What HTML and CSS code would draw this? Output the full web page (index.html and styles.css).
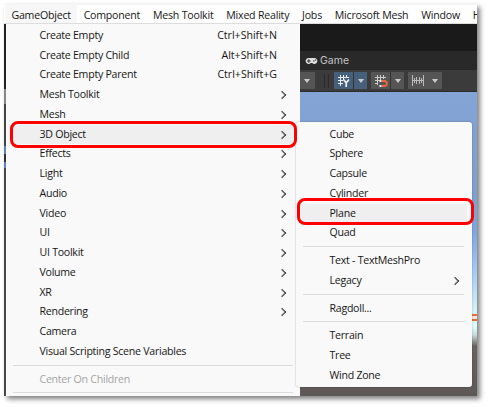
FILE: index.html
```html
<!DOCTYPE html>
<html lang="en">
<head>
<meta charset="utf-8">
<title>GameObject menu</title>
<link rel="stylesheet" href="styles.css">
</head>
<body>
<div class="window">
  <nav class="menubar"><span class="open">GameObject</span><span>Component</span><span>Mesh Toolkit</span><span>Mixed Reality</span><span>Jobs</span><span>Microsoft Mesh</span><span>Window</span><span>H</span></nav>
  <div class="workspace">
    <div class="edge"></div>
    <div class="menu">
      <div class="item">Create Empty<kbd>Ctrl+Shift+N</kbd></div>
      <div class="item">Create Empty Child<kbd>Alt+Shift+N</kbd></div>
      <div class="item">Create Empty Parent<kbd>Ctrl+Shift+G</kbd></div>
      <div class="item sub">Mesh Toolkit</div>
      <div class="item sub">Mesh</div>
      <div class="item sub hover">3D Object</div>
      <div class="item sub">Effects</div>
      <div class="item sub">Light</div>
      <div class="item sub">Audio</div>
      <div class="item sub">Video</div>
      <div class="item sub">UI</div>
      <div class="item sub">UI Toolkit</div>
      <div class="item sub">Volume</div>
      <div class="item sub">XR</div>
      <div class="item sub">Rendering</div>
      <div class="item">Camera</div>
      <div class="item">Visual Scripting Scene Variables</div>
      <div class="sep"></div>
      <div class="item disabled">Center On Children</div>
      <div class="sep"></div>
    </div>
    <div class="editor">
      <div class="titlebar"></div>
      <div class="tab">
        <svg width="13" height="8" viewBox="0 0 13 8"><path fill="#ddd" fill-rule="evenodd" d="M3.8 1h5.4a3 3 0 1 1-2 5.1H5.8A3 3 0 1 1 3.8 1ZM3.3 2.3v1.2H2.1v1h1.2v1.2h1V4.500h1.200v-1H4.300V2.300ZM8.300 3.300v1.200h1.200V3.300Zm1.700-.900v1.200h1.200V2.400Z"/></svg>
        <span>Game</span>
      </div>
      <div class="toolbar">
        <div class="btn first"><i></i></div>
        <div class="grip"></div>
        <div class="btn split on"><b><svg width="14" height="14" viewBox="0 0 14 14" fill="none" stroke="#eee"><path d="M1 3.500h11M1 6.500h5M1 9.500h5M3.500 1v11M6.500 1v5M9.500 1v3" stroke-width="1"/><path d="m6.500 5.500 2.700 3.300 2.800-3.300M9.200 8.500V13" stroke-width="1.700"/></svg></b><i></i></div>
        <div class="btn split"><b><svg width="14" height="14" viewBox="0 0 14 14" fill="none" stroke="#ccc"><path d="M1 3.500h11M1 6.500h5M1 9.500h3M3.500 1v10M6.500 1v5M9.500 1v4"/><path d="M8 7h2.300a2.400 2.400 0 0 1 0 5H8" stroke="#f0673c" stroke-width="1.800"/><path d="M5.500 7h2M5.500 12h2" stroke="#eee" stroke-width="1.800"/></svg></b><i></i></div>
        <div class="btn snap"><b><svg width="14" height="13" viewBox="0 0 14 13" fill="none" stroke="#bbb"><path d="M1.500 1v11M12.500 1v11M1 6.500h12M3.500 4v5M5.500 3v7M8.500 3v7M10.500 4v5"/></svg></b><i></i></div>
      </div>
      <div class="scene"><div class="gizmo"></div></div>
    </div>
  </div>
</div>
<div class="submenu">
  <div class="item">Cube</div>
  <div class="item">Sphere</div>
  <div class="item">Capsule</div>
  <div class="item">Cylinder</div>
  <div class="item hover">Plane</div>
  <div class="item">Quad</div>
  <div class="sep"></div>
  <div class="item">Text - TextMeshPro</div>
  <div class="item sub">Legacy</div>
  <div class="sep"></div>
  <div class="item">Ragdoll...</div>
  <div class="sep"></div>
  <div class="item">Terrain</div>
  <div class="item">Tree</div>
  <div class="item">Wind Zone</div>
</div>
<div class="mark mark-object"></div>
<div class="mark mark-plane"></div>
</body>
</html>
```

FILE: styles.css
```css
* { box-sizing: border-box; }
body {
  margin: 0;
  width: 488px;
  height: 407px;
  padding: 4px;
  overflow: hidden;
  background: #fff;
  color: #161616;
  font: 10.6px/19.75px "Open Sans", "Noto Sans", sans-serif;
  letter-spacing: -0.26px;
}
.window {
  width: 473px;
  height: 392px;
  overflow: hidden;
  background: #fff;
  box-shadow: 3px 3px 5px rgba(0, 0, 0, .5);
}
.menubar {
  display: flex;
  height: 20px;
  padding-left: 1px;
  background: #fff;
  border-top: 1px solid #f5f5f5;
  border-bottom: 1px solid #ddd;
  line-height: 20px;
  letter-spacing: -0.21px;
  white-space: nowrap;
  overflow: hidden;
}
.menubar span { padding: 0 6.400px; }
.menubar .open { background: #f7f7f7; }
.workspace { display: flex; height: 372px; }
.edge {
  width: 2px;
  background: linear-gradient(#222 0 65px, #888 65px 80px, #444 80px 122px, #5b82bd 122px 130px, #333 130px 138px, #5b82bd 138px 144px, #484848 144px);
}
.menu {
  width: 294px;
  padding-top: 1.900px;
  background: #f9f9f9;
  overflow: hidden;
}
.item {
  position: relative;
  display: flex;
  justify-content: space-between;
  height: 19.750px;
  padding: 0 23px 0 33.500px;
  white-space: nowrap;
}
.item kbd { font: inherit; letter-spacing: 0; }
.item.disabled { color: #a5a5a5; }
.item.hover { background: #efefef; }
.menu .hover { margin: 0 7px; padding: 0 16px 0 26.500px; }
.sub::after {
  content: "";
  width: 5px;
  height: 5px;
  margin: 7px -7.500px 0 0;
  border: solid #333;
  border-width: 1px 1px 0 0;
  box-shadow: inset -0.400px 0.400px #777;
  transform: rotate(45deg);
}
.sep {
  height: 8px;
  margin: 0 7px;
  padding-top: 3px;
}
.sep::before {
  content: "";
  display: block;
  height: 1px;
  background: #dedede;
}
.editor {
  display: flex;
  flex-direction: column;
  flex: 1;
  background: #1a1a1a;
}
.titlebar { height: 27px; }
.tab {
  display: flex;
  align-items: center;
  gap: 2px;
  height: 19px;
  padding-left: 5px;
  background: #292929;
  color: #c4c4c4;
  font: 10.500px/20px Inter, sans-serif;
  letter-spacing: 0;
}
.toolbar {
  display: flex;
  align-items: center;
  height: 22px;
  background: #3b3b3b;
  border-bottom: 1px solid #2b2b2b;
}
.btn { display: flex; height: 17px; background: #555; margin-right: 4px; }
.btn i { display: flex; width: 13px; align-items: center; justify-content: center; }
.btn i::before {
  content: "";
  border: 3.500px solid transparent;
  border-top: 4px solid #ccc;
  border-bottom: 0;
}
.btn b { display: flex; width: 20px; align-items: center; justify-content: center; }
.split b { border-right: 1px solid #333; }
.btn.on { background: #46607c; }
.btn.snap i { width: 14px; }
.btn.first { width: 15px; margin-right: 9px; }
.grip {
  width: 5px;
  height: 14px;
  margin-right: 5px;
  border: solid #2b2b2b;
  border-width: 0 1px;
}
.scene {
  flex: 1;
  padding-top: 222px;
  background: linear-gradient(#84a4d5 0, #7f9fcf 100px, #7da6e3 140px, #a5caf8 180px, #cfeef7 215px, #e0ffff 234px, #c8dcdc 243px, #686260 254px, #5e5856);
}
.gizmo {
  width: 8px;
  height: 7px;
  margin-left: auto;
  border: solid #ed6a2e;
  border-width: 2px 0;
  background: #f4e6dc;
}
.submenu {
  position: absolute;
  left: 296px;
  top: 122px;
  width: 176px;
  height: 265px;
  padding-top: 2.500px;
  border-radius: 3px;
  background: #f9f9f9;
  box-shadow: 0 0 2px rgba(0, 0, 0, .3);
}
.submenu .item { padding-right: 22px; }
.submenu .hover { margin: 0 5px; padding-left: 28.500px; }
.submenu .sep { margin-right: 8px; }
.mark {
  position: absolute;
  border: 3px solid #fe0000;
  border-radius: 8px;
}
.mark-object { left: 10px; top: 121px; width: 287px; height: 27px; }
.mark-plane { left: 297px; top: 198px; width: 177px; height: 27px; }
```
